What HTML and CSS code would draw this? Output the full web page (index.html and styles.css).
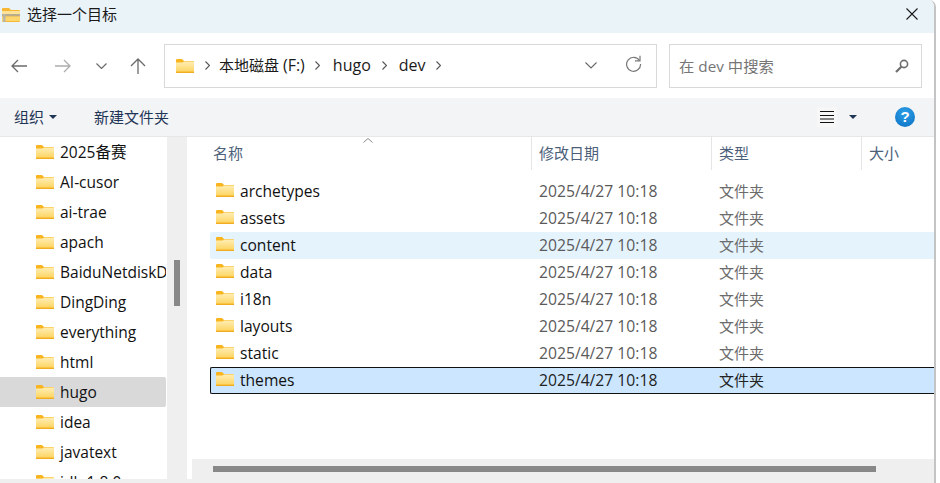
FILE: index.html
```html
<!DOCTYPE html>
<html lang="zh-CN">
<head>
<meta charset="utf-8">
<title>选择一个目标</title>
<link rel="stylesheet" href="styles.css">
</head>
<body>
<svg class="defs" width="0" height="0" aria-hidden="true">
  <defs>
    <linearGradient id="fg" x1="0" y1="0" x2="0" y2="1"><stop offset="0" stop-color="#ffeeb4"/><stop offset="1" stop-color="#fdd565"/></linearGradient>
    <symbol id="folder" viewBox="0 0 18 14">
      <path d="M0 1a1 1 0 0 1 1-1h5l2 2h9a1 1 0 0 1 1 1v10a1 1 0 0 1-1 1H1a1 1 0 0 1-1-1z" fill="#f8b520"/>
      <path d="M0 3.500h6.500l1.500-1h10v10H0z" fill="url(#fg)"/>
      <path d="M0 13.500h18" stroke="#f0ac22" stroke-width="1"/>
    </symbol>
  </defs>
</svg>
<div class="window">
  <header class="titlebar">
    <svg class="title-icon" width="18" height="14" viewBox="0 0 18 14"><path d="M0 1a1 1 0 0 1 1-1h6l2 2h8a1 1 0 0 1 1 1v10a1 1 0 0 1-1 1H1a1 1 0 0 1-1-1z" fill="#f7b733"/><path d="M0 3h18v4H0z" fill="#fde29a"/><path d="M0 6h18v2.500H0z" fill="#b8ac8a"/><path d="M0 8.500h18V13H0z" fill="#fdd76e"/><path d="M1 6h2.500v8H1z" fill="#b9b6a8"/></svg>
    <span class="title-text">选择一个目标</span>
    <svg class="close" width="12" height="12" viewBox="0 0 12 12"><path d="M.5.500l11 11M11.500.500l-11 11" stroke="#1a1a1a" stroke-width="1.100" fill="none"/></svg>
  </header>
  <nav class="navbar">
    <div class="nav-buttons">
      <svg class="nav-back" width="16" height="14" viewBox="0 0 16 14"><path d="M16 7H1M7 1L1 7l6 6" stroke="#6b6b6b" stroke-width="1.300" fill="none"/></svg>
      <svg class="nav-forward" width="16" height="14" viewBox="0 0 16 14"><path d="M0 7h15M9 1l6 6-6 6" stroke="#adadad" stroke-width="1.300" fill="none"/></svg>
      <svg class="nav-down" width="11" height="6" viewBox="0 0 11 6"><path d="M.5.500l5 5 5-5" stroke="#6b6b6b" stroke-width="1.200" fill="none"/></svg>
      <svg class="nav-up" width="16" height="16" viewBox="0 0 16 16"><path d="M8 16V1M1 8l7-7 7 7" stroke="#6b6b6b" stroke-width="1.300" fill="none"/></svg>
    </div>
    <div class="address">
      <svg class="addr-folder" width="18" height="14"><use href="#folder"/></svg>
      <svg class="crumb-sep" width="5" height="9" viewBox="0 0 5 9"><path d="M.5.500l4 4-4 4" stroke="#555" stroke-width="1.100" fill="none"/></svg>
      <span class="crumb crumb-drive">本地磁盘 <span class="drive-letter">(F:)</span></span>
      <svg class="crumb-sep" width="5" height="9" viewBox="0 0 5 9"><path d="M.5.500l4 4-4 4" stroke="#555" stroke-width="1.100" fill="none"/></svg>
      <span class="crumb crumb-hugo">hugo</span>
      <svg class="crumb-sep" width="5" height="9" viewBox="0 0 5 9"><path d="M.5.500l4 4-4 4" stroke="#555" stroke-width="1.100" fill="none"/></svg>
      <span class="crumb crumb-dev">dev</span>
      <svg class="crumb-sep" width="5" height="9" viewBox="0 0 5 9"><path d="M.5.500l4 4-4 4" stroke="#555" stroke-width="1.100" fill="none"/></svg>
      <span class="addr-spacer"></span>
      <svg class="addr-drop" width="12" height="7" viewBox="0 0 12 7"><path d="M.5.500l5.500 5.500 5.500-5.500" stroke="#666" stroke-width="1.100" fill="none"/></svg>
      <svg class="addr-refresh" width="17" height="17" viewBox="0 0 17 17"><path d="M14.500 5.500A7 7 0 1 0 15.600 9" stroke="#777" stroke-width="1.200" fill="none"/><path d="M15 .8v5h-5" stroke="#777" stroke-width="1.200" fill="none"/></svg>
    </div>
    <div class="search">
      <span class="search-text">在 dev 中搜索</span>
      <svg class="search-icon" width="14" height="14" viewBox="0 0 14 14"><circle cx="9" cy="5" r="3.600" stroke="#6e6e6e" stroke-width="1.600" fill="none"/><path d="M6.300 7.700L1 13" stroke="#6e6e6e" stroke-width="2.200"/></svg>
    </div>
  </nav>
  <div class="toolbar">
    <span class="tool-item">组织</span>
    <svg class="caret caret-org" width="8" height="4" viewBox="0 0 8 4"><path d="M0 0h8L4 4z" fill="#1f3556"/></svg>
    <span class="tool-item tool-new">新建文件夹</span>
    <span class="tool-spacer"></span>
    <span class="view-btn"><svg width="14" height="12" viewBox="0 0 14 12"><path d="M0 .5h14M0 4.500h14M0 8h14M0 11.500h14" stroke="#111" stroke-width="1"/></svg></span>
    <svg class="caret caret-view" width="8" height="4" viewBox="0 0 8 4"><path d="M0 0h8L4 4z" fill="#1f3556"/></svg>
    <span class="help">?</span>
  </div>
  <main class="content">
    <aside class="sidebar">
      <div class="tree-row"><svg class="folder" width="18" height="14"><use href="#folder"/></svg><span>2025备赛</span></div>
      <div class="tree-row"><svg class="folder" width="18" height="14"><use href="#folder"/></svg><span>AI-cusor</span></div>
      <div class="tree-row"><svg class="folder" width="18" height="14"><use href="#folder"/></svg><span>ai-trae</span></div>
      <div class="tree-row"><svg class="folder" width="18" height="14"><use href="#folder"/></svg><span>apach</span></div>
      <div class="tree-row"><svg class="folder" width="18" height="14"><use href="#folder"/></svg><span>BaiduNetdiskDownload</span></div>
      <div class="tree-row"><svg class="folder" width="18" height="14"><use href="#folder"/></svg><span>DingDing</span></div>
      <div class="tree-row"><svg class="folder" width="18" height="14"><use href="#folder"/></svg><span>everything</span></div>
      <div class="tree-row"><svg class="folder" width="18" height="14"><use href="#folder"/></svg><span>html</span></div>
      <div class="tree-row selected"><svg class="folder" width="18" height="14"><use href="#folder"/></svg><span>hugo</span></div>
      <div class="tree-row"><svg class="folder" width="18" height="14"><use href="#folder"/></svg><span>idea</span></div>
      <div class="tree-row"><svg class="folder" width="18" height="14"><use href="#folder"/></svg><span>javatext</span></div>
      <div class="tree-row"><svg class="folder" width="18" height="14"><use href="#folder"/></svg><span>jdk-1.8.0</span></div>
    </aside>
    <div class="vscroll"><div class="vthumb"></div></div>
    <section class="files">
      <div class="file-head">
        <span class="sort-arrow"><svg width="10" height="5" viewBox="0 0 10 5"><path d="M.5 4.500L5 .5l4.500 4" stroke="#8a8a8a" fill="none"/></svg></span>
        <div class="col col-name">名称</div>
        <div class="col col-date">修改日期</div>
        <div class="col col-type">类型</div>
        <div class="col col-size">大小</div>
      </div>
      <div class="file-rows">
        <div class="file-row"><span class="fname"><svg class="folder" width="18" height="14"><use href="#folder"/></svg>archetypes</span><span class="fdate">2025/4/27 10:18</span><span class="ftype">文件夹</span></div>
        <div class="file-row"><span class="fname"><svg class="folder" width="18" height="14"><use href="#folder"/></svg>assets</span><span class="fdate">2025/4/27 10:18</span><span class="ftype">文件夹</span></div>
        <div class="file-row hover"><span class="fname"><svg class="folder" width="18" height="14"><use href="#folder"/></svg>content</span><span class="fdate">2025/4/27 10:18</span><span class="ftype">文件夹</span></div>
        <div class="file-row"><span class="fname"><svg class="folder" width="18" height="14"><use href="#folder"/></svg>data</span><span class="fdate">2025/4/27 10:18</span><span class="ftype">文件夹</span></div>
        <div class="file-row"><span class="fname"><svg class="folder" width="18" height="14"><use href="#folder"/></svg>i18n</span><span class="fdate">2025/4/27 10:18</span><span class="ftype">文件夹</span></div>
        <div class="file-row"><span class="fname"><svg class="folder" width="18" height="14"><use href="#folder"/></svg>layouts</span><span class="fdate">2025/4/27 10:18</span><span class="ftype">文件夹</span></div>
        <div class="file-row"><span class="fname"><svg class="folder" width="18" height="14"><use href="#folder"/></svg>static</span><span class="fdate">2025/4/27 10:18</span><span class="ftype">文件夹</span></div>
        <div class="file-row current"><span class="fname"><svg class="folder" width="18" height="14"><use href="#folder"/></svg>themes</span><span class="fdate">2025/4/27 10:18</span><span class="ftype">文件夹</span></div>
      </div>
      <div class="hscroll"><div class="hthumb"></div></div>
    </section>
  </main>
  <div class="bottom-strip"></div>
</div>
</body>
</html>
```

FILE: styles.css
```css
html, body {
  margin: 0;
  padding: 0;
  background: #fff;
  overflow: hidden;
}
body {
  width: 940px;
  height: 483px;
  font-family: "Open Sans", "Noto Sans CJK SC", sans-serif;
  font-size: 15px;
  color: #111;
}
.defs { position: absolute; }
svg { display: block; flex: none; }
.window {
  width: 934px;
  height: 483px;
  display: flex;
  flex-direction: column;
  border-right: 2px solid #c4c4c4;
  border-top-right-radius: 7px;
  overflow: hidden;
  box-sizing: content-box;
}
.titlebar {
  height: 33px;
  background: #e9f3f8;
  display: flex;
  align-items: center;
  padding-left: 2px;
  font-size: 15px;
}
.title-icon { margin-right: 7px; margin-top: -4px; }
.title-text { color: #1a1a1a; flex: 1; line-height: 28px; padding-bottom: 6px; }
.close { margin-right: 16px; margin-top: -5px; }
.navbar {
  height: 65px;
  background: #fff;
  display: flex;
  align-items: center;
}
.nav-buttons {
  width: 164px;
  display: flex;
  align-items: center;
  flex: none;
}
.nav-back { margin-left: 11px; }
.nav-forward { margin-left: 28px; }
.nav-down { margin-left: 25px; }
.nav-up { margin-left: 23px; }
.address, .search {
  height: 44px;
  box-sizing: border-box;
  border: 1px solid #d9d9d9;
  display: flex;
  align-items: center;
}
.address {
  width: 493px;
  padding-left: 11px;
}
.addr-folder { margin-right: 11px; }
.crumb { color: #1a1a1a; white-space: nowrap; padding-bottom: 2px; }
.crumb-drive { margin: 0 10px 0 9px; font-size: 15px; }
.drive-letter { font-size: 16px; }
.crumb-hugo { margin: 0 11px 0 13px; font-size: 16px; }
.crumb-dev { margin: 0 10px 0 12px; font-size: 16px; }
.addr-spacer { flex: 1; }
.addr-drop { margin-right: 28px; }
.addr-refresh { margin-right: 14px; margin-top: -4px; }
.search {
  width: 253px;
  margin-left: 12px;
  padding: 0 12px 0 9px;
  justify-content: space-between;
}
.search-text { color: #767676; font-size: 15.300px; padding-bottom: 2px; }
.toolbar {
  height: 38px;
  background: #f3f4f6;
  border-bottom: 1px solid #e6e7e9;
  display: flex;
  align-items: center;
  padding-left: 14px;
  color: #1f3556;
}
.tool-item { color: #1f3556; white-space: nowrap; padding-bottom: 2px; }
.caret-org { margin-left: 5px; }
.tool-new { margin-left: 37px; }
.tool-spacer { flex: 1; }
.view-btn {
  width: 20px;
  height: 20px;
  background: #f7f7f7;
  display: flex;
  align-items: center;
  justify-content: center;
  margin-right: 12px;
}
.caret-view { margin-right: 38px; }
.help {
  width: 20px;
  height: 20px;
  border-radius: 50%;
  background: radial-gradient(circle at 50% 30%, #2da0e8, #0a6fc2);
  color: #fff;
  font-family: "Liberation Sans", sans-serif;
  font-size: 15px;
  font-weight: 700;
  line-height: 20px;
  text-align: center;
  margin-right: 19px;
}
.content {
  flex: 1;
  min-height: 0;
  display: flex;
}
.sidebar {
  width: 167px;
  flex: none;
  overflow: hidden;
}
.tree-row {
  height: 30px;
  display: flex;
  align-items: center;
  padding-left: 36px;
  white-space: nowrap;
  margin-right: 1px;
  border-radius: 0 2px 2px 0;
  overflow: hidden;
}
.tree-row .folder { margin-right: 6px; }
.tree-row span { color: #111; font-size: 15.500px; line-height: 20px; padding-bottom: 1px; }
.tree-row.selected { background: #d9d9d9; }
.vscroll {
  width: 20px;
  flex: none;
  background: #efefef;
  padding-top: 123px;
  box-sizing: border-box;
}
.vthumb {
  width: 6px;
  height: 46px;
  margin-left: 7px;
  background: #888;
}
.files {
  margin-left: 3px;
  flex: 1;
  min-width: 0;
  display: flex;
  flex-direction: column;
  position: relative;
}
.file-head {
  height: 33px;
  flex: none;
  display: flex;
  color: #4c607a;
}
.sort-arrow {
  position: absolute;
  left: 173px;
  top: 1px;
}
.col {
  box-sizing: border-box;
  display: flex;
  align-items: center;
  padding-left: 7px;
  padding-bottom: 2px;
  border-left: 1px solid #e5e5e5;
  height: 33px;
}
.col-name { width: 341px; padding-left: 23px; border-left: none; }
.col-date { width: 180px; }
.col-type { width: 150px; }
.col-size { flex: 1; }
.file-rows {
  flex: 1;
  min-height: 0;
  padding: 8px 0 0 20px;
}
.file-row {
  height: 27px;
  box-sizing: border-box;
  display: flex;
  align-items: center;
  color: #5a5a5a;
  border-radius: 2px 0 0 2px;
  padding-bottom: 2px;
}
.file-row.hover { background: #e5f3fd; }
.file-row.current {
  background: #cbe6fe;
  border: 1px solid #111;
  border-right: none;
  color: #222;
  padding-bottom: 2px;
}
.fname {
  width: 329px;
  flex: none;
  display: flex;
  align-items: center;
  padding-left: 6px;
  box-sizing: border-box;
  color: #111;
  font-size: 15.600px;
}
.fname .folder { margin-right: 6px; margin-top: -1px; }
.fdate { width: 180px; flex: none; font-size: 15.700px; }
.ftype { color: #6b6b6b; }
.current .ftype { color: #222; }
.current .fname { width: 328px; padding-left: 5px; }
.hscroll {
  height: 20px;
  flex: none;
  background: #efefef;
  margin-left: 2px;
  padding-top: 7px;
  box-sizing: border-box;
}
.hthumb {
  width: 663px;
  height: 6px;
  margin-left: 21px;
  background: #888;
}
.bottom-strip {
  height: 4px;
  flex: none;
  background: #efefef;
}
```
